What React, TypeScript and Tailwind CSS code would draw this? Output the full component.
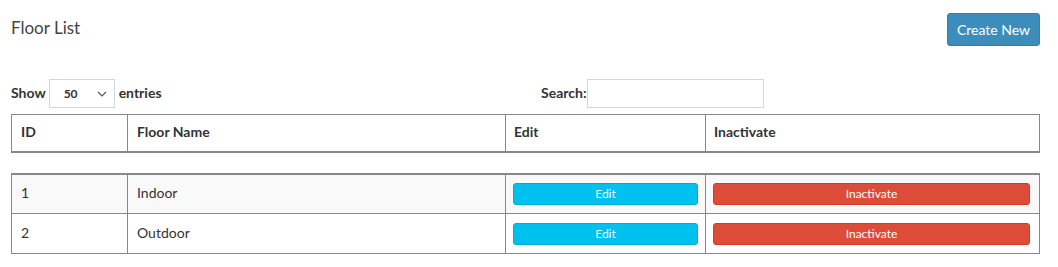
import React from "react";

const rows = [
  { id: 1, name: "Indoor" },
  { id: 2, name: "Outdoor" },
];

function ColGroup() {
  return (
    <colgroup>
      <col className="w-[116px]" />
      <col className="w-[378px]" />
      <col className="w-[200px]" />
      <col />
    </colgroup>
  );
}

export default function App() {
  return (
    <div className="min-h-[267px] bg-white pl-[11px] pr-[18px] font-['Source_Sans_Pro',Lato,sans-serif] text-[14px] text-[#333]">
      <div className="flex h-[60px] items-start justify-between pt-[13px]">
        <h1 className="pt-[3px] text-[17px] leading-[24px] text-[#444]">Floor List</h1>
        <button className="h-[33px] w-[93px] rounded-[3px] border border-[#367fa9] bg-[#3c8dbc] text-[14px] text-white">
          Create New
        </button>
      </div>

      <div className="mt-[19px] flex h-[29px] items-center">
        <div className="flex w-[530px] items-center font-bold">
          <span className="pb-[3px]">Show</span>
          <div className="ml-[3px] flex h-[29px] w-[66px] items-center justify-between border border-[#d2d6de] pl-[14px] pr-[7px] text-[12px]">
            <span>50</span>
            <svg width="10" height="6" viewBox="0 0 10 6" fill="none" stroke="#555" strokeWidth="1.2">
              <path d="M1 1l4 4 4-4" />
            </svg>
          </div>
          <span className="ml-[4px] pb-[3px]">entries</span>
        </div>
        <label className="flex items-center font-bold">
          <span className="pb-[3px]">Search:</span>
          <div className="h-[29px] w-[177px] border border-[#d2d6de]" />
        </label>
      </div>

      <div className="mt-[6px]">
        <table className="w-full table-fixed border-collapse">
          <ColGroup />
          <thead>
            <tr className="h-[37px] border border-b-2 border-[#888] text-left">
              <th className="border-r border-[#888] pb-[2px] pl-[9px] font-bold">ID</th>
              <th className="border-r border-[#888] pb-[2px] pl-[9px] font-bold">Floor Name</th>
              <th className="border-r border-[#888] pb-[2px] pl-[8px] font-bold">Edit</th>
              <th className="pb-[2px] pl-[8px] font-bold">Inactivate</th>
            </tr>
          </thead>
        </table>

        <table className="mt-[20px] w-full table-fixed border-collapse">
          <ColGroup />
          <tbody>
            {rows.map((r, i) => (
              <tr
                key={r.id}
                className={`h-[40px] border border-[#888] ${i === 0 ? "border-t-2 bg-[#f9f9f9]" : "bg-white"}`}
              >
                <td className="border-r border-[#888] pb-[2px] pl-[9px]">{r.id}</td>
                <td className="border-r border-[#888] pb-[2px] pl-[9px]">{r.name}</td>
                <td className="border-r border-[#888] px-[7px]">
                  <button className="h-[22px] w-full rounded-[3px] border border-[#00acd6] bg-[#00c0ef] text-[12px] text-white">
                    Edit
                  </button>
                </td>
                <td className="px-[7px] pr-[9px]">
                  <button className="h-[22px] w-full rounded-[3px] border border-[#d73925] bg-[#dd4b39] text-[12px] text-white">
                    Inactivate
                  </button>
                </td>
              </tr>
            ))}
          </tbody>
        </table>
      </div>
    </div>
  );
}
